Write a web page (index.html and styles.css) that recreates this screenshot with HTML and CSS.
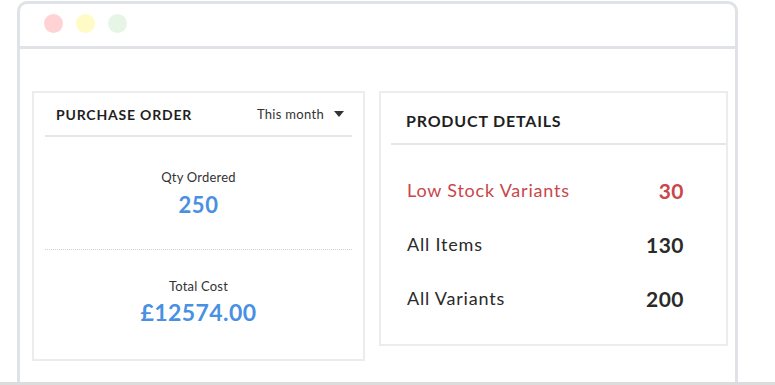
FILE: index.html
```html
<!DOCTYPE html>
<html lang="en">
<head>
  <meta charset="UTF-8">
  <title>Inventory Dashboard</title>
  <link rel="stylesheet" href="styles.css">
</head>
<body>
  <div class="page">
    <div class="window">
      <div class="titlebar">
        <span class="dot red"></span>
        <span class="dot yellow"></span>
        <span class="dot green"></span>
      </div>

      <div class="content">
        <div class="card purchase">
          <div class="card-head">
            <h2>PURCHASE ORDER</h2>
            <div class="period">This month <span class="caret"></span></div>
          </div>
          <div class="stat">
            <div class="stat-label">Qty Ordered</div>
            <div class="stat-value">250</div>
          </div>
          <div class="stat dotted">
            <div class="stat-label">Total Cost</div>
            <div class="stat-value big">£12574.00</div>
          </div>
        </div>

        <div class="card details">
          <div class="card-head wide">
            <h2>PRODUCT DETAILS</h2>
          </div>
          <div class="row alert">
            <span>Low Stock Variants</span>
            <span class="num">30</span>
          </div>
          <div class="row">
            <span>All Items</span>
            <span class="num">130</span>
          </div>
          <div class="row">
            <span>All Variants</span>
            <span class="num">200</span>
          </div>
        </div>
      </div>
    </div>
  </div>
</body>
</html>
```

FILE: styles.css
```css
* {
  box-sizing: border-box;
}

body {
  margin: 0;
  background: #ffffff;
  font-family: 'Lato', 'Liberation Sans', sans-serif;
  color: #222;
}

.page {
  height: 385px;
  overflow: hidden;
  border-bottom: 3px solid #dcdcdc;
  padding: 1px 0 0 17px;
}

.window {
  width: 721px;
  height: 420px;
  border: 3px solid #dfe3e8;
  border-radius: 10px 10px 0 0;
  background: #fff;
}

.titlebar {
  height: 45px;
  border-bottom: 3px solid #dfe3e8;
  display: flex;
  align-items: center;
  gap: 13px;
  padding: 0 0 3px 24px;
}

.dot {
  width: 19px;
  height: 19px;
  border-radius: 50%;
}

.dot.red { background: #ffd3d4; }
.dot.yellow { background: #fffac6; }
.dot.green { background: #e6f5e6; }

.content {
  display: flex;
  align-items: flex-start;
  gap: 14px;
  padding: 42px 0 0 12px;
}

.card {
  border: 2px solid #ececec;
  background: #fff;
}

.purchase {
  width: 333px;
  height: 270px;
  padding: 0 11px;
}

.details {
  width: 349px;
  height: 255px;
  padding-left: 10px;
}

.card-head {
  display: flex;
  align-items: center;
  justify-content: space-between;
  height: 44px;
  border-bottom: 2px solid #e6e6e6;
  padding: 0 8px 0 11px;
}

.card-head h2 {
  margin: 0;
  font-size: 14px;
  font-weight: 700;
  letter-spacing: 0.8px;
  color: #1f1f1f;
}

.card-head.wide {
  height: 52px;
  padding: 0 0 0 15px;
}

.card-head.wide h2 {
  font-size: 16px;
  letter-spacing: 0.8px;
  margin-top: 4px;
}

.period {
  font-size: 13px;
  letter-spacing: 0.3px;
  color: #333;
  display: flex;
  align-items: center;
  gap: 10px;
}

.caret {
  width: 0;
  height: 0;
  border-left: 5px solid transparent;
  border-right: 5px solid transparent;
  border-top: 6px solid #333;
}

.stat {
  text-align: center;
  height: 112px;
  padding-top: 32px;
}

.stat.dotted {
  border-top: 1px dotted #c9d3e0;
  padding-top: 28px;
}

.stat-label {
  font-size: 13px;
  letter-spacing: 0.2px;
  color: #333;
}

.stat-value {
  font-size: 22px;
  font-weight: 700;
  letter-spacing: 0.6px;
  color: #4a90e2;
  margin-top: 6px;
}

.stat-value.big {
  font-size: 23px;
  letter-spacing: 0.4px;
  margin-top: 4px;
}

.row {
  display: flex;
  justify-content: space-between;
  align-items: center;
  height: 54px;
  padding: 0 42px 0 16px;
  font-size: 18px;
  letter-spacing: 0.8px;
  color: #2a2a2a;
}

.row .num {
  font-size: 21px;
  font-weight: 700;
  letter-spacing: 0.5px;
}

.row.alert {
  color: #c9474b;
  margin-top: 18px;
}
```
